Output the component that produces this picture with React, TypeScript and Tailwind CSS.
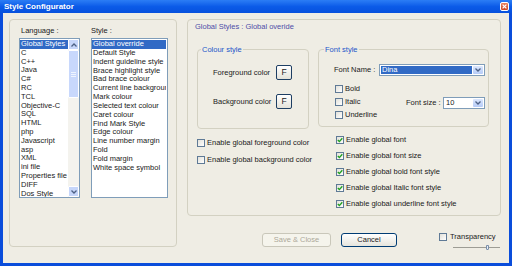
import React from "react";

const languages = [
    "Global Styles", "C", "C++", "Java", "C#", "RC", "TCL", "Objective-C", "SQL", "HTML",
    "php", "Javascript", "asp", "XML", "ini file", "Properties file", "DIFF", "Dos Style",
];

const styles = [
    "Global override", "Default Style", "Indent guideline style", "Brace highlight style",
    "Bad brace colour", "Current line background colour", "Mark colour", "Selected text colour",
    "Caret colour", "Find Mark Style", "Edge colour", "Line number margin", "Fold", "Fold margin",
    "White space symbol",
];

const Chevron = ({ up }: { up?: boolean }) => (
    <svg width="6" height="4" viewBox="0 0 6 4">
        <path d={up ? "M0.5 3.5 L3 1 L5.5 3.5" : "M0.5 0.5 L3 3 L5.5 0.5"} stroke="#4D6185" strokeWidth="1.3" fill="none" />
    </svg>
);

const Check = ({ checked }: { checked?: boolean }) => (
    <span className="w-[8px] h-[8px] border border-[#5F7A96] bg-gradient-to-br from-[#E2E1DA] to-white flex items-center justify-center shrink-0">
        {checked && (
            <svg width="6" height="6" viewBox="0 0 6 6">
                <path d="M0.8 3 L2.4 4.6 L5.3 1.3" stroke="#21A121" strokeWidth="1.4" fill="none" />
            </svg>
        )}
    </span>
);

const CheckRow = ({ label, checked }: { label: string; checked?: boolean }) => (
    <div className="flex items-center gap-[2px] h-[8px] leading-[8px] whitespace-nowrap">
        <Check checked={checked} />
        <span>{label}</span>
    </div>
);

const ColorButton = () => (
    <div className="w-[16px] h-[15px] rounded-[2px] border border-[#1D3E63] bg-gradient-to-b from-white to-[#E3E2DA] flex items-center justify-center text-[8.5px] leading-none">
        F
    </div>
);

const Combo = ({ value, selected, width }: { value: string; selected?: boolean; width: string }) => (
    <div className={`${width} h-[12px] border border-[#7F9DB9] bg-white flex p-[1px]`}>
        <div className={`flex-1 pl-[1px] leading-[8px] ${selected ? "bg-[#316AC5] text-white" : ""}`}>{value}</div>
        <div className="w-[10px] ml-[1px] rounded-[1px] bg-gradient-to-b from-[#DCE7FD] to-[#B5CBF7] flex items-center justify-center">
            <Chevron />
        </div>
    </div>
);

export default function App() {
    return (
        <div className="w-[512px] h-[266px] overflow-hidden flex flex-col bg-[#0A4DDB] text-[7.5px] text-[#1a1a1a] font-['Liberation_Sans',Arial,sans-serif]">
            {/* Title bar */}
            <div className="h-[13px] shrink-0 flex items-center justify-between bg-gradient-to-b from-[#2B7DF5] via-[#0B5BE8] to-[#0751DD]">
                <span className="ml-[4px] text-white font-bold text-[8px] leading-none">Style Configurator</span>
                <div className="mr-[3px] w-[9px] h-[9px] rounded-[2px] border border-white bg-gradient-to-b from-[#E9825F] to-[#CB4421] flex items-center justify-center">
                    <svg width="5" height="5" viewBox="0 0 5 5">
                        <path d="M0.6 0.6 L4.4 4.4 M4.4 0.6 L0.6 4.4" stroke="white" strokeWidth="1.2" />
                    </svg>
                </div>
            </div>

            {/* Body */}
            <div className="flex-1 mx-[3px] mb-[3px] bg-[#EFEDE4] flex items-start pl-[6px] pt-[6px] gap-[10px]">
                {/* Language / Style */}
                <div className="w-[168px] h-[228px] shrink-0 border border-[#D3D1C2] rounded-[4px] pt-[6px] pl-[9px] flex gap-[11px]">
                    <div className="flex flex-col">
                        <div className="pl-[2px] leading-[9px] h-[9px]">Language :</div>
                        <div className="mt-[3px] w-[61px] h-[160px] border border-[#7F9DB9] bg-white flex">
                            <div className="flex-1 pt-[1px] overflow-hidden">
                                {languages.map((lang, i) => (
                                    <div key={lang} className={`h-[8.8px] leading-[8.8px] pl-[1px] whitespace-nowrap ${i === 0 ? "bg-[#316AC5] text-white" : ""}`}>
                                        {lang}
                                    </div>
                                ))}
                            </div>
                            <div className="w-[11px] flex flex-col bg-[#F4F3EE]">
                                <div className="h-[11px] rounded-[1px] border border-white bg-[#C6D6FA] flex items-center justify-center">
                                    <Chevron up />
                                </div>
                                <div className="h-[48px] rounded-[1px] border border-white bg-[#C8D8FC] flex flex-col items-center justify-center gap-[1px]">
                                    <div className="w-[5px] h-px bg-[#EEF4FE]" />
                                    <div className="w-[5px] h-px bg-[#EEF4FE]" />
                                    <div className="w-[5px] h-px bg-[#EEF4FE]" />
                                </div>
                                <div className="flex-1" />
                                <div className="h-[11px] rounded-[1px] border border-white bg-[#C6D6FA] flex items-center justify-center">
                                    <Chevron />
                                </div>
                            </div>
                        </div>
                    </div>
                    <div className="flex flex-col">
                        <div className="leading-[9px] h-[9px]">Style :</div>
                        <div className="mt-[3px] w-[77px] h-[160px] border border-[#7F9DB9] bg-white pt-[1px] overflow-hidden">
                            {styles.map((s, i) => (
                                <div key={s} className={`h-[8.85px] leading-[8.85px] pl-[1px] mr-[1px] whitespace-nowrap overflow-hidden ${i === 0 ? "bg-[#316AC5] text-white" : ""}`}>
                                    {s}
                                </div>
                            ))}
                        </div>
                    </div>
                </div>

                {/* Right column */}
                <div className="flex flex-col">
                    <div className="w-[314px] h-[197px] border border-[#D3D1C2] rounded-[4px]">
                        <div className="ml-[7px] mt-[2px] leading-[9px] text-[#4E4EA8]">Global Styles : Global overide</div>

                        <div className="ml-[9px] mt-[14px] flex gap-[9px]">
                            <fieldset className="w-[112px] h-[84px] border border-[#D3D1C2] rounded-[4px]">
                                <legend className="ml-[3px] px-[1px] leading-[9px] text-[#2355C9]">Colour style</legend>
                                <div className="pl-[15px] pt-[11px] flex flex-col gap-[14px]">
                                    <div className="flex items-center h-[15px]">
                                        <span className="w-[63px]">Foreground color</span>
                                        <ColorButton />
                                    </div>
                                    <div className="flex items-center h-[15px]">
                                        <span className="w-[63px]">Background color</span>
                                        <ColorButton />
                                    </div>
                                </div>
                            </fieldset>

                            <fieldset className="w-[171px] h-[82px] border border-[#D3D1C2] rounded-[4px]">
                                <legend className="ml-[5px] px-[1px] leading-[9px] text-[#2355C9]">Font style</legend>
                                <div className="pl-[15px] pt-[10px]">
                                    <div className="flex items-center h-[12px]">
                                        <span className="w-[45px]">Font Name :</span>
                                        <Combo value="Dina" selected width="w-[106px]" />
                                    </div>
                                    <div className="flex mt-[9px]">
                                        <div className="w-[72px] pl-[1px] flex flex-col gap-[5px]">
                                            <CheckRow label="Bold" />
                                            <CheckRow label="Italic" />
                                            <CheckRow label="Underline" />
                                        </div>
                                        <div className="mt-[12px] flex items-center h-[12px]">
                                            <span className="w-[37px]">Font size :</span>
                                            <Combo value="10" width="w-[42px]" />
                                        </div>
                                    </div>
                                </div>
                            </fieldset>
                        </div>

                        <div className="ml-[9px] mt-[7px] flex">
                            <div className="w-[139px] pt-[3px] flex flex-col gap-[9px]">
                                <CheckRow label="Enable global foreground color" />
                                <CheckRow label="Enable global background color" />
                            </div>
                            <div className="flex flex-col gap-[8px]">
                                <CheckRow label="Enable global font" checked />
                                <CheckRow label="Enable global font size" checked />
                                <CheckRow label="Enable global bold font style" checked />
                                <CheckRow label="Enable global Italic font style" checked />
                                <CheckRow label="Enable global underline font style" checked />
                            </div>
                        </div>
                    </div>

                    {/* Buttons */}
                    <div className="mt-[17px] pl-[75px] flex items-start">
                        <div className="w-[69px] h-[14px] rounded-[3px] border border-[#C9C7BA] bg-[#F5F4EC] text-[#ACA899] flex items-center justify-center">
                            Save &amp; Close
                        </div>
                        <div className="ml-[10px] w-[56px] h-[14px] rounded-[3px] border border-[#003C74] bg-gradient-to-b from-white to-[#E6E5DD] flex items-center justify-center">
                            Cancel
                        </div>
                        <div className="ml-[42px] flex flex-col">
                            <div className="flex items-center gap-[3px] h-[8px]">
                                <Check />
                                <span>Transparency</span>
                            </div>
                            <div className="ml-[14px] mt-[4px] w-[47px] h-[5px] flex items-center">
                                <div className="w-[33px] h-px bg-[#9D9C94]" />
                                <div className="w-[3px] h-[5px] border border-[#7A8FA8] bg-[#E8EEF8] rounded-b-[1px]" />
                                <div className="flex-1 h-px bg-[#9D9C94]" />
                            </div>
                        </div>
                    </div>
                </div>
            </div>
        </div>
    );
}
